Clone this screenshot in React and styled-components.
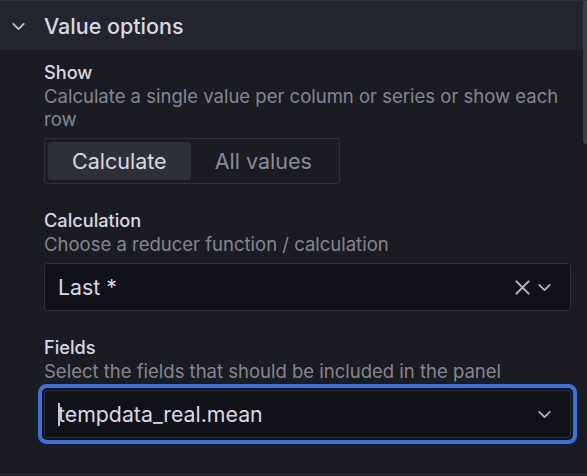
import React from "react";
import styled, { createGlobalStyle } from "styled-components";

const GlobalStyle = createGlobalStyle`
  html, body {
    margin: 0;
    padding: 0;
    background: #181b1f;
  }
  body {
    font-family: Inter, "Noto Sans", sans-serif;
    color: #ccccdc;
  }
`;

function Chevron() {
  return (
    <svg width="21" height="21" viewBox="0 0 24 24" fill="none">
      <path
        d="M6 9l6 6 6-6"
        stroke="currentColor"
        strokeWidth="2"
        strokeLinecap="round"
        strokeLinejoin="round"
      />
    </svg>
  );
}

function Cross() {
  return (
    <svg width="21" height="21" viewBox="0 0 24 24" fill="none">
      <path
        d="M5 5l14 14M19 5L5 19"
        stroke="currentColor"
        strokeWidth="2.4"
        strokeLinecap="round"
      />
    </svg>
  );
}

function Field({ label, description, children }) {
  return (
    <FieldWrap>
      <Label>{label}</Label>
      <Description>{description}</Description>
      {children}
    </FieldWrap>
  );
}

export default function App() {
  return (
    <>
      <GlobalStyle />
      <Pane>
        <Header>
          <HeaderIcon>
            <Chevron />
          </HeaderIcon>
          <Title>Value options</Title>
        </Header>
        <Body>
          <Field
            label="Show"
            description="Calculate a single value per column or series or show each row"
          >
            <RadioGroup>
              <RadioButton $active>Calculate</RadioButton>
              <RadioButton>All values</RadioButton>
            </RadioGroup>
          </Field>
          <Field
            label="Calculation"
            description="Choose a reducer function / calculation"
          >
            <Select>
              <SelectValue>Last *</SelectValue>
              <SelectIcons>
                <Cross />
                <Chevron />
              </SelectIcons>
            </Select>
          </Field>
          <Field
            label="Fields"
            description="Select the fields that should be included in the panel"
          >
            <Select $focused>
              <SelectValue>
                <Caret />
                tempdata_real.mean
              </SelectValue>
              <SelectIcons>
                <Chevron />
              </SelectIcons>
            </Select>
          </Field>
        </Body>
        <Scrollbar />
      </Pane>
    </>
  );
}

const Pane = styled.div`
  position: relative;
  width: 587px;
  height: 476px;
  box-sizing: border-box;
  border-top: 1px solid #2d3036;
  overflow: hidden;
  background: #1a1c21;
`;

const Header = styled.div`
  height: 49px;
  background: #22252b;
  display: flex;
  align-items: center;
  padding-left: 8px;
  gap: 15px;
`;

const HeaderIcon = styled.span`
  display: flex;
  color: #c4c5cf;
  margin-top: 1px;
`;

const Title = styled.div`
  font-size: 21.5px;
  font-weight: 500;
  color: #d8d9e3;
`;

const Body = styled.div`
  padding: 9px 16px 36px 44px;
  display: flex;
  flex-direction: column;
  gap: 23px;
  border-bottom: 1px solid #2d3036;
`;

const FieldWrap = styled.div`
  display: flex;
  flex-direction: column;
`;

const Label = styled.div`
  font-size: 18.2px;
  font-weight: 500;
  line-height: 26px;
  color: #d8d9e3;
`;

const Description = styled.div`
  font-size: 18.5px;
  line-height: 23px;
  color: rgba(204, 204, 220, 0.62);
  margin-bottom: 7px;
`;

const RadioGroup = styled.div`
  align-self: flex-start;
  display: flex;
  padding: 3px;
  border: 1px solid #2f3238;
  border-radius: 3px;
  height: 46px;
  box-sizing: border-box;
`;

const RadioButton = styled.div`
  height: 38px;
  display: flex;
  align-items: center;
  padding: 0 24px;
  font-size: 21.5px;
  border-radius: 3px;
  color: ${(p) => (p.$active ? "#d8d9e3" : "rgba(204, 204, 220, 0.65)")};
  background: ${(p) => (p.$active ? "#2e3037" : "transparent")};
`;

const Select = styled.div`
  height: 48px;
  box-sizing: border-box;
  display: flex;
  align-items: center;
  justify-content: space-between;
  padding: 0 15px 0 13px;
  background: #111217;
  border: 1px solid #2f3238;
  border-radius: 3px;
  box-shadow: ${(p) =>
    p.$focused ? "0 0 0 2px #111217, 0 0 0 6px #3b71da" : "none"};
`;

const SelectValue = styled.div`
  font-size: 21.3px;
  color: #d8d9e3;
  display: flex;
  align-items: center;
`;

const Caret = styled.span`
  width: 2px;
  height: 23px;
  background: #c4c5cf;
  margin-right: -2px;
`;

const SelectIcons = styled.div`
  display: flex;
  align-items: center;
  gap: 1px;
  color: #b3b4be;
`;

const Scrollbar = styled.div`
  position: absolute;
  top: 0;
  right: 0;
  width: 4px;
  height: 143px;
  background: #3b3e44;
  border-radius: 0 0 0 3px;
`;
